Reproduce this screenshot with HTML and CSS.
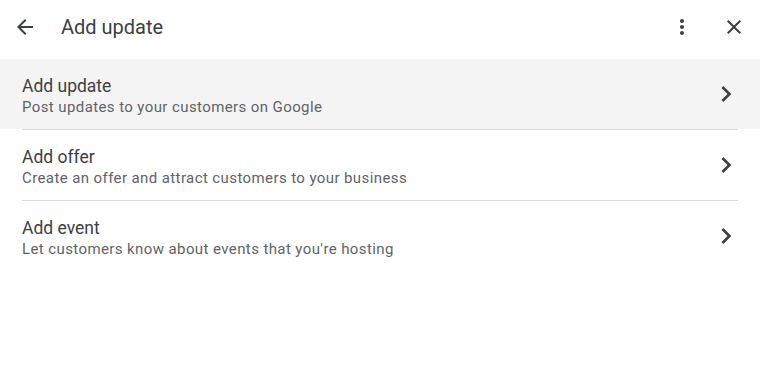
FILE: index.html
```html
<!DOCTYPE html>
<html>
<head>
<meta charset="utf-8">
<link rel="stylesheet" href="styles.css">
</head>
<body>
<div class="dialog">
  <header class="header">
    <button class="icon-btn back" aria-label="Back">
      <svg viewBox="0 0 24 24" width="24" height="24"><path d="M20 11H7.83l5.59-5.59L12 4l-8 8 8 8 1.41-1.41L7.83 13H20v-2z"/></svg>
    </button>
    <h1 class="title">Add update</h1>
    <div class="spacer"></div>
    <button class="icon-btn more" aria-label="More">
      <svg viewBox="0 0 24 24" width="24" height="24"><path d="M12 8c1.1 0 2-.9 2-2s-.9-2-2-2-2 .9-2 2 .9 2 2 2zm0 2c-1.1 0-2 .9-2 2s.9 2 2 2 2-.9 2-2-.9-2-2-2zm0 6c-1.1 0-2 .9-2 2s.9 2 2 2 2-.9 2-2-.9-2-2-2z"/></svg>
    </button>
    <button class="icon-btn close" aria-label="Close">
      <svg viewBox="0 0 24 24" width="24" height="24"><path d="M19 6.41L17.59 5 12 10.59 6.41 5 5 6.41 10.59 12 5 17.59 6.41 19 12 13.41 17.59 19 19 17.59 13.41 12z"/></svg>
    </button>
  </header>
  <ul class="list">
    <li class="item active">
      <div class="text">
        <div class="item-title">Add update</div>
        <div class="item-sub">Post updates to your customers on Google</div>
      </div>
      <svg class="chev" viewBox="0 0 24 24" width="32" height="32"><path d="M10 6L8.59 7.41 13.17 12l-4.58 4.59L10 18l6-6z"/></svg>
    </li>
    <li class="divider"></li>
    <li class="item">
      <div class="text">
        <div class="item-title">Add offer</div>
        <div class="item-sub">Create an offer and attract customers to your business</div>
      </div>
      <svg class="chev" viewBox="0 0 24 24" width="32" height="32"><path d="M10 6L8.59 7.41 13.17 12l-4.58 4.59L10 18l6-6z"/></svg>
    </li>
    <li class="divider"></li>
    <li class="item">
      <div class="text">
        <div class="item-title">Add event</div>
        <div class="item-sub">Let customers know about events that you're hosting</div>
      </div>
      <svg class="chev" viewBox="0 0 24 24" width="32" height="32"><path d="M10 6L8.59 7.41 13.17 12l-4.58 4.59L10 18l6-6z"/></svg>
    </li>
  </ul>
</div>
</body>
</html>
```
FILE: styles.css
```css
html, body {
  margin: 0;
  padding: 0;
  background: #fff;
}
body {
  font-family: Roboto, "Noto Sans", Arial, sans-serif;
  color: #3c4043;
}
.dialog {
  width: 760px;
}
.header {
  height: 59px;
  display: flex;
  align-items: center;
  padding: 0 14px 5px 13px;
  box-sizing: border-box;
}
.icon-btn {
  border: 0;
  background: none;
  padding: 0;
  width: 24px;
  height: 24px;
  display: flex;
  align-items: center;
  justify-content: center;
  fill: #3c4043;
  cursor: pointer;
}
.title {
  margin: 0 0 0 24px;
  font-size: 20px;
  line-height: 24px;
  font-weight: 400;
  color: #3c4043;
  letter-spacing: 0;
}
.spacer { flex: 1; }
.more { margin-right: 28px; }
.list {
  list-style: none;
  margin: 0;
  padding: 0;
}
.item {
  height: 70px;
  display: flex;
  align-items: center;
  padding: 0 18px 0 22px;
  box-sizing: border-box;
}
.item.active {
  background: #f4f4f4;
}
.text {
  flex: 1;
  padding-top: 4px;
}
.item-title {
  font-size: 17.5px;
  line-height: 22px;
  color: #3c4043;
}
.item-sub {
  font-size: 15px;
  line-height: 20px;
  color: #5f6368;
  letter-spacing: 0.4px;
  margin-top: 0;
}
.chev {
  fill: #3c4043;
  display: block;
}
.divider {
  height: 1px;
  background: #dadce0;
  margin: 0 22px;
}
```
